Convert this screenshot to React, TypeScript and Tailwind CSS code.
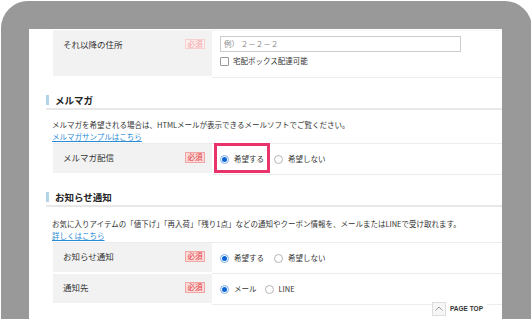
import React from "react";

const jp = "font-['Noto_Sans_CJK_JP','Noto_Sans',sans-serif]";

function Badge({ faded }: { faded?: boolean }) {
  return (
    <span
      className={
        faded
          ? "flex h-[10px] w-[20px] items-center justify-center border border-[#f8cfcf] bg-[#fdeeee] text-[7.5px] leading-none text-[#f2a3a3]"
          : "flex h-[11px] w-[20px] items-center justify-center border border-[#f2a5a5] bg-[#fbdada] text-[7.5px] leading-none text-[#e2393c]"
      }
    >
      必須
    </span>
  );
}

function Radio({ checked, label }: { checked?: boolean; label: string }) {
  return (
    <span className="flex items-center gap-[5px]">
      <span
        className={
          checked
            ? "flex h-[9px] w-[9px] items-center justify-center rounded-full border border-[#7eaee6] bg-white"
            : "h-[9px] w-[9px] rounded-full border border-[#b5b5b5] bg-white"
        }
      >
        {checked && <span className="h-[5px] w-[5px] rounded-full bg-[#0a64d6]" />}
      </span>
      <span className="text-[7.5px] leading-[10px] text-[#333]">{label}</span>
    </span>
  );
}

function Row({
  label,
  faded,
  height,
  children,
}: {
  label: string;
  faded?: boolean;
  height: string;
  children: React.ReactNode;
}) {
  return (
    <div className="flex">
      <div className={`w-[159px] shrink-0 border-b border-white bg-[#f2f2f2] pl-[10px] pr-[7px] pt-[8px] ${height}`}>
        <div className="flex h-[10px] items-center justify-between">
          <span className="text-[8.5px] leading-[10px] text-[#333]">{label}</span>
          <Badge faded={faded} />
        </div>
      </div>
      <div className="flex-1 border-b border-[#ececec] pl-[8px]">{children}</div>
    </div>
  );
}

function Heading({ title }: { title: string }) {
  return (
    <div className="ml-[17px]">
      <div className="flex h-[16px] items-center gap-[6px]">
        <span className="h-[10px] w-[3px] bg-[#b3d4e5]" />
        <span className="text-[9.5px] font-bold leading-[16px] text-[#222]">{title}</span>
      </div>
      <div className="h-[2px] bg-[#e8e8e8]" />
    </div>
  );
}

export default function App() {
  return (
    <div className={`h-[321px] w-[531px] overflow-hidden bg-white ${jp}`}>
      <div className="ml-[1px] mt-[1px] h-[318px] w-[531px] rounded-t-[27px] bg-[#999999] pl-[28px] pr-[30px] pt-[28px]">
        <div className="relative h-[290px] overflow-hidden bg-white">
          <div className="w-[520px] pt-[1px]">
            <div className="ml-[24px] border-t border-[#f4f4f4]">
              <Row label="それ以降の住所" faded height="h-[46px]">
                <div className="flex h-[46px] flex-col pt-[5px]">
                  <div className="flex h-[16px] w-[241px] items-center border border-[#cccccc] pl-[3px] text-[7.5px] text-[#8a8a8a]">
                    例）&nbsp;２－２－２
                  </div>
                  <div className="mt-[4px] flex items-center gap-[4px]">
                    <span className="h-[9px] w-[9px] rounded-[1px] border border-[#9a9a9a] bg-white" />
                    <span className="text-[7.5px] leading-[10px] text-[#333]">宅配ボックス配達可能</span>
                  </div>
                </div>
              </Row>
            </div>

            <div className="mt-[14px]">
              <Heading title="メルマガ" />
            </div>
            <div className="ml-[23px] mt-[9px] text-[7.5px] leading-[12px] text-[#333]">
              <p>メルマガを希望される場合は、HTMLメールが表示できるメールソフトでご覧ください。</p>
              <a className="text-[#2a8bd6] underline">メルマガサンプルはこちら</a>
            </div>
            <div className="ml-[24px] border-t border-[#ececec]">
              <Row label="メルマガ配信" height="h-[30px]">
                <div className="flex h-[30px] items-center">
                  <span className="relative mr-[10px]">
                    <Radio checked label="希望する" />
                    <span className="absolute -left-[6px] -top-[11px] h-[30px] w-[56px] border-[3px] border-[#e8336b]" />
                  </span>
                  <Radio label="希望しない" />
                </div>
              </Row>
            </div>

            <div className="mt-[14px]">
              <Heading title="お知らせ通知" />
            </div>
            <div className="ml-[23px] mt-[11px] text-[7.5px] leading-[12px] text-[#333]">
              <p>お気に入りアイテムの「値下げ」「再入荷」「残り1点」などの通知やクーポン情報を、メールまたはLINEで受け取れます。</p>
              <a className="text-[#2a8bd6] underline">詳しくはこちら</a>
            </div>
            <div className="ml-[24px] border-t border-[#ececec]">
              <Row label="お知らせ通知" height="h-[30px]">
                <div className="flex h-[30px] items-center gap-[10px]">
                  <Radio checked label="希望する" />
                  <Radio label="希望しない" />
                </div>
              </Row>
              <Row label="通知先" height="h-[30px]">
                <div className="flex h-[30px] items-center gap-[8px]">
                  <Radio checked label="メール" />
                  <Radio label="LINE" />
                </div>
              </Row>
            </div>
          </div>

          <div className="absolute left-[403px] top-[273px] flex items-center gap-[4px] bg-white pr-[4px]">
            <span className="flex h-[14px] w-[14px] items-center justify-center border border-[#dddddd] bg-[#f6f6f6]">
              <svg width="10" height="10" viewBox="0 0 10 10" fill="none" stroke="#9a9a9a" strokeWidth="1">
                <polyline points="1.5,6.5 5,3 8.5,6.5" />
              </svg>
            </span>
            <span className="font-['Liberation_Sans',sans-serif] text-[6.5px] font-bold text-[#333]">PAGE TOP</span>
          </div>
        </div>
      </div>
    </div>
  );
}
